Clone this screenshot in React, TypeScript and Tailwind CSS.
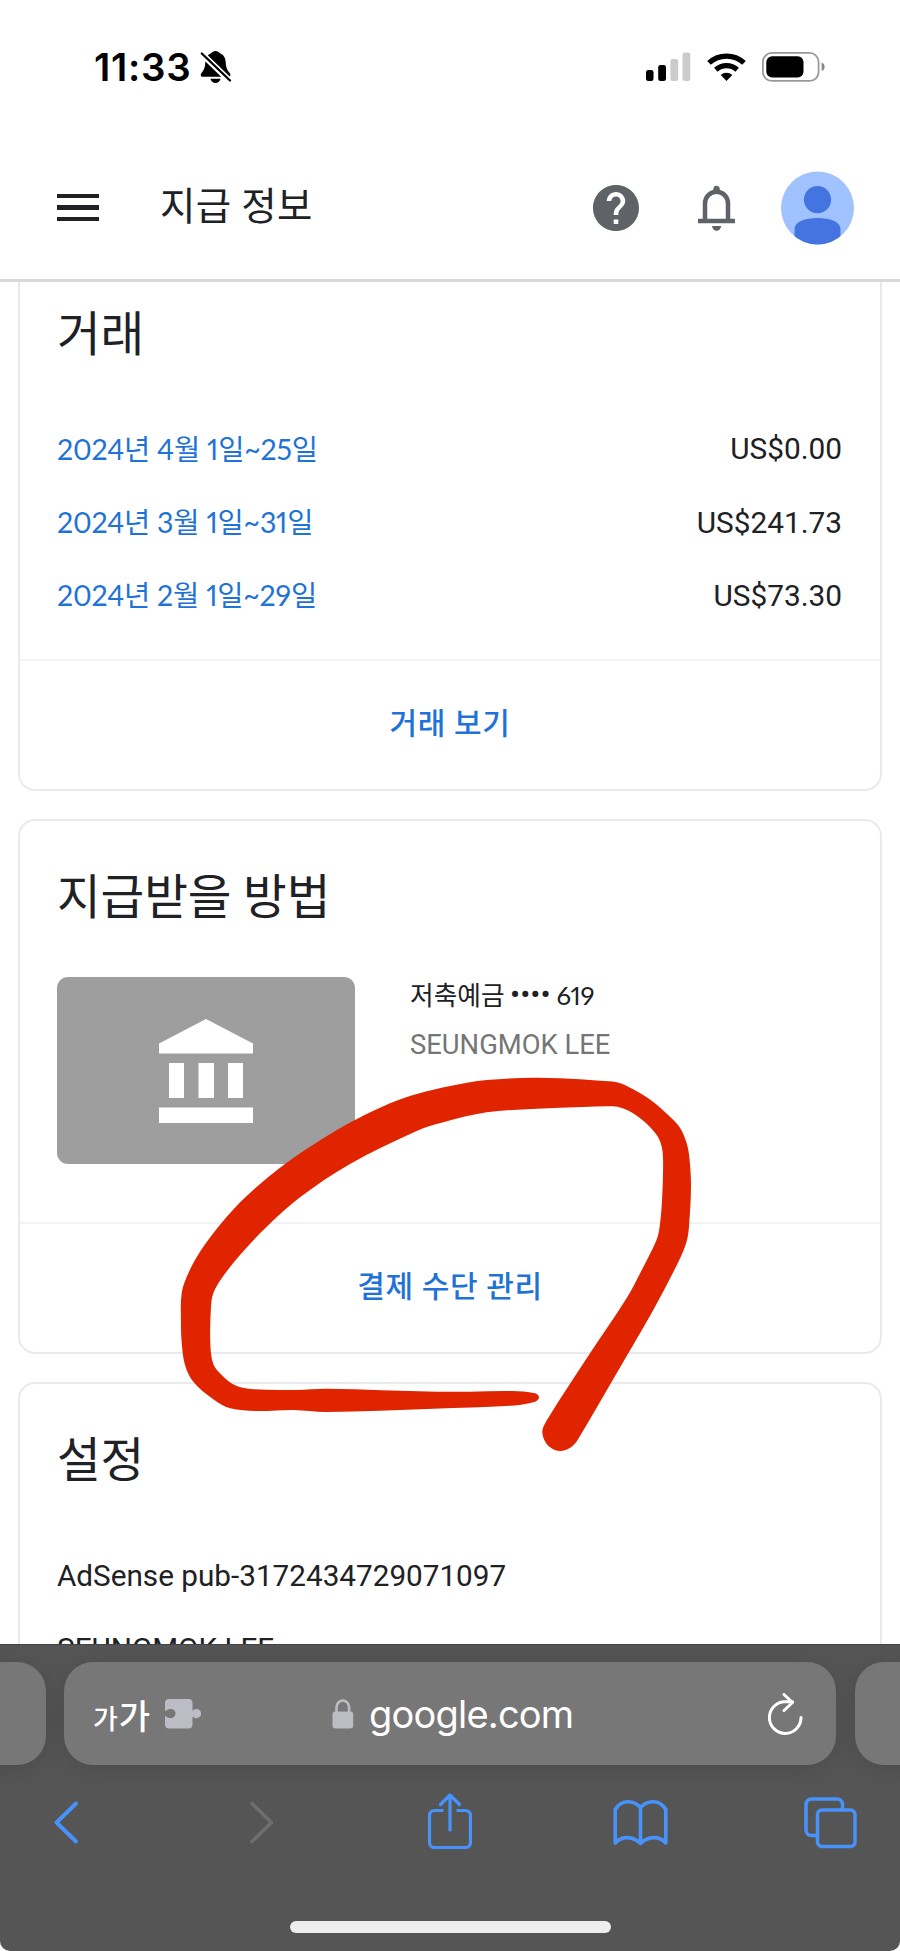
import React from "react";
import clsx from "clsx";

const transactions = [
  { period: "2024년 4월 1일~25일", amount: "US$0.00" },
  { period: "2024년 3월 1일~31일", amount: "US$241.73" },
  { period: "2024년 2월 1일~29일", amount: "US$73.30" },
];

// outline of the red marker stroke, clockwise from the left side
const markerPoints: [number, number][] = [
  [181, 1325], [181.7, 1293], [188.3, 1273.3], [200, 1251.7], [221.7, 1222.7], [246.7, 1196],
  [285, 1164], [323.3, 1138.3], [355, 1120], [390, 1103.3], [416.7, 1094], [450, 1086],
  [486.7, 1080], [533.3, 1077.7], [560, 1078.3], [600, 1080.7], [616.7, 1082.2], [626.7, 1086],
  [650, 1099.4], [670, 1116.7], [680, 1127.7], [686.7, 1143.2], [689.3, 1157], [691, 1184.5],
  [689.3, 1222.4], [686.7, 1241.3], [678.3, 1262], [653.3, 1310], [613.3, 1379], [580, 1436],
  [572.5, 1446], [560.7, 1451], [548.5, 1446], [542.3, 1432.4], [546.7, 1420.4], [590, 1353.2],
  [626.7, 1298], [643.3, 1267], [656.7, 1239.6], [660, 1224], [662.3, 1194.8], [663, 1157],
  [660.7, 1143], [655, 1132.8], [643.3, 1120.8], [630, 1111.5], [620, 1107.4], [610, 1106.3],
  [583.3, 1107], [536.7, 1108.7], [486.7, 1112.3], [443.3, 1122.3], [416.7, 1131], [350, 1164],
  [300, 1197.3], [266.7, 1226.7], [240, 1255], [221.7, 1278.3], [213.3, 1293.3], [211, 1306.7],
  [210.3, 1343.3], [213.3, 1364], [221.7, 1375], [235, 1385.3], [253.3, 1389.3], [296.7, 1390],
  [326.7, 1388.7], [436.7, 1391.7], [470, 1391.7], [511.7, 1391], [535, 1393.3], [539, 1397.7],
  [533.3, 1402.3], [511.7, 1405.7], [433.3, 1408.7], [326.7, 1412], [293.3, 1410], [256.7, 1411],
  [230, 1408.3], [213.3, 1399.3], [193.3, 1381.7], [185, 1365], [181.7, 1343],
];

// closed path whose corners are softened by the distance to each neighbour
function smoothPath(points: [number, number][]) {
  const n = points.length;
  let d = `M${points[0][0]} ${points[0][1]}`;
  for (let i = 0; i < n; i++) {
    const p0 = points[(i - 1 + n) % n];
    const p1 = points[i];
    const p2 = points[(i + 1) % n];
    const p3 = points[(i + 2) % n];
    const len = Math.hypot(p2[0] - p1[0], p2[1] - p1[1]) / 3;
    const a = Math.hypot(p2[0] - p0[0], p2[1] - p0[1]);
    const b = Math.hypot(p3[0] - p1[0], p3[1] - p1[1]);
    d += `C${p1[0] + ((p2[0] - p0[0]) / a) * len} ${p1[1] + ((p2[1] - p0[1]) / a) * len}`;
    d += ` ${p2[0] - ((p3[0] - p1[0]) / b) * len} ${p2[1] - ((p3[1] - p1[1]) / b) * len}`;
    d += ` ${p2[0]} ${p2[1]}`;
  }
  return d + "Z";
}

function StatusBar() {
  return (
    <div className="flex h-[134px] shrink-0 items-start justify-between pt-[43px] pr-[74px] pl-[94px]">
      <div className="flex h-12 items-center">
        <span className="w-[106px] font-['Inter',sans-serif] text-[38.5px] leading-12 font-semibold tracking-[0.7px] whitespace-nowrap text-black">
          11:33
        </span>
        <svg width="32" height="34" viewBox="0 0 32 34">
          <path
            d="M15.500 1c2 0 3.500 1 4.500 2.300 4 1.800 5.500 5 5.700 9 .2 4.500 1 7 3.200 9.700 1 1.200 1.500 2 1.500 3 0 1.300-.8 1.800-2 1.800H2.700c-1.200 0-2-.6-2-1.800 0-1 .5-1.700 1.500-3C4.400 19.300 5.100 16.800 5.300 12.300c.2-4 1.700-7.200 5.700-9C12 2 13.500 1 15.500 1z"
            fill="#000"
          />
          <path d="M10.500 28.800h10c-.5 2.600-2.300 4.200-5 4.200s-4.500-1.600-5-4.200z" fill="#000" />
          <path d="M-1 1L33 34" stroke="#fff" strokeWidth="6" />
          <path d="M1.800 3.500L30 30.500" stroke="#000" strokeWidth="2.300" strokeLinecap="round" />
        </svg>
      </div>
      <div className="flex h-12 items-center">
        <svg width="45" height="30" viewBox="0 0 45 30">
          <rect x="0" y="18" width="7.500" height="11" rx="2.300" fill="#000" />
          <rect x="12.200" y="13" width="7.800" height="16" rx="2.300" fill="#000" />
          <rect x="24.400" y="7" width="7.800" height="22" rx="2.300" fill="#cbcbcb" />
          <rect x="36.500" y="0.500" width="7.800" height="28.500" rx="2.300" fill="#cbcbcb" />
        </svg>
        <svg className="ml-4" width="40" height="30" viewBox="0 0 40 30">
          <g fill="none" stroke="#000" strokeWidth="5.200">
            <path d="M2 10.800a26 26 0 0 1 35 0" />
            <path d="M8.800 17.800a16 16 0 0 1 21.400 0" />
          </g>
          <path d="M19.500 29l-5.800-5.900a8.300 8.300 0 0 1 11.600 0z" fill="#000" />
        </svg>
        <svg className="ml-[15px]" width="64" height="30" viewBox="0 0 64 30">
          <rect x="0.900" y="0.900" width="55.700" height="28" rx="9" fill="none" stroke="#999" strokeWidth="1.800" />
          <rect x="4.300" y="4.300" width="37.200" height="21.200" rx="5.800" fill="#000" />
          <path d="M59.600 10.500c2 .7 3 2.300 3 4.300s-1 3.600-3 4.300z" fill="#888" />
        </svg>
      </div>
    </div>
  );
}

function AppBar() {
  return (
    <header className="flex h-[148px] shrink-0 items-center border-b-[3px] border-[#d9d9dc] pt-0.5 pr-[45px] pl-[57px]">
      <div className="flex w-[42px] flex-col gap-[7px]">
        <span className="h-[4.5px] bg-[#202124]" />
        <span className="h-[4.5px] bg-[#202124]" />
        <span className="h-[4.5px] bg-[#202124]" />
      </div>
      <h1 className="ml-[61px] flex-1 pb-px text-[38.5px] leading-[48px] tracking-[0.3px] text-[#202124]">지급 정보</h1>
      <svg width="46" height="46" viewBox="2 2 20 20" fill="#5f6368">
        <path d="M12 2C6.480 2 2 6.480 2 12s4.480 10 10 10 10-4.480 10-10S17.520 2 12 2zm1 17h-2v-2h2v2zm2.070-7.750l-.9.920C13.450 12.900 13 13.500 13 15h-2v-.5c0-1.100.450-2.100 1.170-2.830l1.240-1.260c.370-.360.590-.860.590-1.410 0-1.100-.9-2-2-2s-2 .9-2 2H8c0-2.210 1.790-4 4-4s4 1.790 4 4c0 .880-.360 1.680-.930 2.250z" />
      </svg>
      <svg className="ml-[59px]" width="37" height="46" viewBox="0 0 37 46">
        <path d="M7 35V18.500a11.500 11.800 0 0 1 23 0V35" fill="none" stroke="#5f6368" strokeWidth="4.500" />
        <path d="M0 33.700h37v4.500H0zM14 41h9.200c-.4 3-2.200 4.700-4.600 4.700S14.400 44 14 41zM15.300 8V4.200a3.250 3.500 0 0 1 6.500 0V8z" fill="#5f6368" />
      </svg>
      <svg className="ml-[46px]" width="74" height="74" viewBox="0 0 74 74">
        <clipPath id="avatar">
          <circle cx="36.500" cy="37" r="36.500" />
        </clipPath>
        <g clipPath="url(#avatar)">
          <rect width="74" height="74" fill="#a0c2ff" />
          <circle cx="36.500" cy="28.700" r="13.600" fill="#4374e0" />
          <path d="M13.500 74V58.500C13.500 50.500 24.500 47 36.500 47s23 3.500 23 11.500V74z" fill="#4374e0" />
        </g>
      </svg>
    </header>
  );
}

function Card({ title, action, className, children }: {
  title: string;
  action?: string;
  className?: string;
  children: React.ReactNode;
}) {
  return (
    <section className={clsx("mx-[18px] flex shrink-0 flex-col border-2 border-[#e8eaed]", className)}>
      <h2 className="px-[37px] text-[47.5px] leading-[60px] tracking-[-0.1px] text-[#202124]">{title}</h2>
      <div className="mt-[49px] flex-1 pr-[38px] pl-[37px]">{children}</div>
      {action && (
        <div className="flex h-[130px] items-center justify-center border-t-2 border-[#f1f3f4] text-[30px] font-medium tracking-[0.6px] text-[#1f72d6]">
          <span className="pb-1">{action}</span>
        </div>
      )}
    </section>
  );
}

function BankImage() {
  return (
    <div className="flex h-[187px] w-[298px] shrink-0 items-center justify-center rounded-[11px] bg-[#9e9e9e]">
      <svg width="94" height="104" viewBox="0 0 94 104" fill="#fff">
        <path d="M47 0l47 24.500v10H0v-10zM10 44h15v35H10zM39.500 44H55v35H39.500zM69 44h15v35H69zM0 88.500h94V104H0z" />
      </svg>
    </div>
  );
}

function BrowserBar() {
  return (
    <footer className="flex h-[307px] shrink-0 flex-col items-center overflow-hidden rounded-b-[10px] border-t border-[#444] bg-[#555]">
      <div className="mt-[17px] flex h-[103px] w-[1200px] shrink-0 justify-center gap-[18.500px]">
        <div className="w-[195px] rounded-[29px] bg-[#777] shadow-[0_4px_26px_rgba(0,0,0,0.12)]" />
        <div className="flex w-[772px] items-center rounded-[29px] bg-[#777] pr-[33px] pl-[29px] shadow-[0_4px_26px_rgba(0,0,0,0.12)]">
          <div className="flex w-[72px] items-baseline pt-[7px] text-white">
            <span className="text-[27px] font-medium">가</span>
            <span className="ml-px text-[34px] font-medium">가</span>
          </div>
          <svg width="36" height="30" viewBox="0 0 36 30" fill="#bcbcc4">
            <path d="M4 0h19.500a4 4 0 0 1 4 4v7.500c1 0 1.500-1.500 4-1.500a4.600 4.600 0 0 1 0 9.200c-2.500 0-3-1.500-4-1.500V25.500a4 4 0 0 1-4 4H4a4 4 0 0 1-4-4V17.200c1.500 0 2 1.800 6 1.800a4.500 4.500 0 0 0 0-9c-4 0-4.500 2-6 2V4a4 4 0 0 1 4-4z" />
          </svg>
          <svg className="ml-[131px]" width="22" height="30" viewBox="0 0 22 30">
            <rect x="0.500" y="12.500" width="20.700" height="17" rx="3" fill="#bcbcc4" />
            <path d="M4.500 14V8.500a6.300 7 0 0 1 12.600 0V14" fill="none" stroke="#bcbcc4" strokeWidth="2.600" />
          </svg>
          <span className="ml-[15px] flex-1 pt-0.5 font-['Inter',sans-serif] text-[38px] tracking-[-0.8px] text-white">
            google.com
          </span>
          <svg width="36" height="42" viewBox="0 0 36 42" fill="none" stroke="#fff" strokeWidth="3" strokeLinecap="round" strokeLinejoin="round">
            <path d="M34 24.500A15.800 15.800 0 1 1 18 8.800h7.500" />
            <path d="M17 1.500l8.500 8-8.500 8" />
          </svg>
        </div>
        <div className="w-[195px] rounded-[29px] bg-[#777] shadow-[0_4px_26px_rgba(0,0,0,0.12)]" />
      </div>
      <nav className="mt-[27px] flex h-[60px] w-full shrink-0 items-center pl-[52.5px]">
        <svg width="27" height="60" viewBox="0 0 27 60" fill="none" stroke="#4893fb" strokeWidth="3.900" strokeLinecap="round" strokeLinejoin="round">
          <path d="M23 11.500L3.500 30.500 23 49.500" />
        </svg>
        <svg className="ml-[169px]" width="27" height="60" viewBox="0 0 27 60" fill="none" stroke="#6e6e6e" strokeWidth="3.500" strokeLinecap="round" strokeLinejoin="round">
          <path d="M3 11.500l19.500 19L3 49.500" />
        </svg>
        <svg className="ml-[152px]" width="44" height="60" viewBox="0 0 44 60" fill="none" stroke="#4893fb" strokeWidth="3.200" strokeLinejoin="round">
          <path d="M15.500 18.500H6.500a5 5 0 0 0-5 5v27a5 5 0 0 0 5 5h31a5 5 0 0 0 5-5v-27a5 5 0 0 0-5-5h-9" />
          <path d="M22 38V4M12.500 12.500L22 3l9.500 9.500" strokeLinecap="round" />
        </svg>
        <svg className="ml-[141px]" width="55" height="60" viewBox="0 0 55 60" fill="none" stroke="#4893fb" strokeWidth="3.600" strokeLinejoin="round">
          <path d="M2.200 51V17.500C8 7.500 20 7.500 27.500 15.500 35 7.500 47 7.500 52.800 17.500V51C46 43.500 35 44 27.500 51.500 20 44 9 43.500 2.200 51zM27.500 15.500v36" />
        </svg>
        <svg className="ml-[136px]" width="53" height="60" viewBox="0 0 53 60" fill="none" stroke="#4893fb" strokeWidth="3.500">
          <rect x="13.500" y="18" width="37.500" height="36.500" rx="4.500" />
          <path d="M13.500 43.500H7.500A5.500 5.500 0 0 1 2 38V12.500A5.500 5.500 0 0 1 7.500 7H33a5.500 5.500 0 0 1 5.500 5.500V18" />
        </svg>
      </nav>
      <div className="mt-[69px] h-[12px] w-[321px] rounded-full bg-[#eee]" />
    </footer>
  );
}

export default function App() {
  return (
    <div className="relative flex h-[1951px] w-[900px] flex-col overflow-hidden bg-white font-['Roboto','Noto_Sans_CJK_KR',sans-serif]">
      <StatusBar />
      <AppBar />
      <main className="flex flex-1 flex-col overflow-hidden">
        <Card title="거래" action="거래 보기" className="h-[509px] rounded-b-[17px] border-t-0 pt-[23px]">
          {transactions.map((item) => (
            <div key={item.period} className="flex h-[73.3px] items-center justify-between pb-0.5">
              <a className="pb-px font-['Lato','Noto_Sans_CJK_KR',sans-serif] text-[28.5px] tracking-[-0.2px] text-[#1f72d6] proportional-nums">
                {item.period}
              </a>
              <span className="text-[29.8px] text-[#202124]">{item.amount}</span>
            </div>
          ))}
        </Card>
        <Card title="지급받을 방법" action="결제 수단 관리" className="mt-7 h-[535px] rounded-[17px] pt-[47px]">
          <div className="flex">
            <BankImage />
            <div className="ml-[55px] flex flex-col">
              <span className="font-['Lato','Noto_Sans_CJK_KR',sans-serif] text-[25.700px] leading-9 text-[#202124]">
                저축예금 <span className="-ml-px font-['Roboto',sans-serif] text-[30px]">••••</span>
                <span className="ml-[6px] proportional-nums">619</span>
              </span>
              <span className="mt-[14px] text-[27.4px] leading-9 text-[#757575]">SEUNGMOK LEE</span>
            </div>
          </div>
        </Card>
        <Card title="설정" className="mt-7 h-[600px] rounded-[17px] pt-[47px]">
          <div className="flex h-[73px] items-center text-[29.7px] text-[#202124]">AdSense pub-3172434729071097</div>
          <div className="flex h-[73px] items-center text-[29.7px] text-[#202124]">SEUNGMOK LEE</div>
        </Card>
      </main>
      <BrowserBar />
      <svg className="pointer-events-none absolute inset-0" width="900" height="1951" viewBox="0 0 900 1951">
        <path d={smoothPath(markerPoints)} fill="#e12400" />
      </svg>
    </div>
  );
}
